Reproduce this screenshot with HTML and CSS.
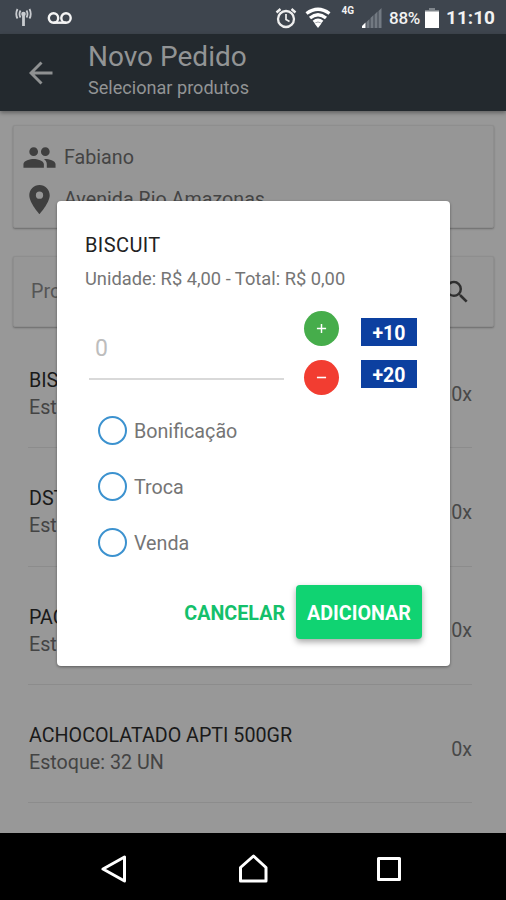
FILE: index.html
```html
<!DOCTYPE html>
<html lang="pt-BR">
<head>
    <meta charset="UTF-8">
    <meta name="viewport" content="width=device-width, initial-scale=1.0">
    <title>Novo Pedido</title>
    <link rel="stylesheet" href="styles.css">
</head>
<body>
    <div class="screen">
        <div class="status-bar">
            <svg class="icon-antenna" width="18" height="20" viewBox="0 0 18 20" fill="none" stroke="#c9ccd0" stroke-width="1.8">
                <path d="M8.500 7v11" stroke-width="2.800"/>
                <circle cx="8.500" cy="6" r="2.300" fill="#c9ccd0" stroke="none"/>
                <path d="M5.500 2.500q-2 3.500 0 7M11.500 2.500q2 3.500 0 7M2.500 1q-2.500 5 0 9.500M14.500 1q2.500 5 0 9.500"/>
            </svg>
            <svg class="icon-voicemail" width="26" height="14" viewBox="0 0 26 14" fill="none" stroke="#f4f4f4" stroke-width="2.400">
                <circle cx="6.500" cy="7" r="4.700"/>
                <circle cx="19" cy="7" r="4.700"/>
                <path d="M6.500 11.700H19"/>
            </svg>
            <svg class="icon-alarm" width="22" height="22" viewBox="0 0 22 22" fill="none" stroke="#eee" stroke-width="2.300">
                <circle cx="11" cy="12" r="8"/>
                <path d="M11 7v5.500l3.500 2" stroke-width="1.700"/>
                <path d="M1.500 5.500l4-3.500M20.500 5.500l-4-3.500" stroke-width="2.400"/>
            </svg>
            <svg class="icon-wifi" width="26" height="22" viewBox="0 0 26 22" fill="none" stroke="#fff" stroke-width="3.300">
                <path d="M1.500 6.500q11.500-8.500 23 0M5 11q8-6.500 16 0M8.700 15q4.300-3.800 8.600 0" />
                <path d="M9.500 16.500q3.500-2.500 7 0L13 21z" fill="#fff" stroke="none"/>
            </svg>
            <span class="network">4G</span>
            <svg class="icon-signal" width="20" height="20" viewBox="0 0 20 20" fill="#737a82">
                <path d="M0 20v-2l3.500-3.500V20z" fill="#fff"/>
                <path d="M4.500 20v-6l3-3v9zM8.500 20V10l3-3v13zM12.500 20V6.500l3-3V20zM16.500 20V3l3-3v20z"/>
            </svg>
            <span class="battery-level">88%</span>
            <svg class="icon-battery" width="14" height="20" viewBox="0 0 14 20">
                <path d="M4 0h6v2h4v2H0V2h4z" fill="#80868c"/>
                <path d="M0 3.500h14V20H0z" fill="#fff"/>
            </svg>
            <span class="clock">11:10</span>
        </div>

        <div class="header">
            <svg class="icon-back" width="24" height="24" viewBox="0 0 24 24" fill="none" stroke="#8f9192" stroke-width="2.900">
                <path d="M23.500 12H2.500M12.500 1.500L2 12l10.500 10.500"/>
            </svg>
            <div class="header-text">
                <h1>Novo Pedido</h1>
                <p>Selecionar produtos</p>
            </div>
        </div>

        <div class="content">
            <div class="card client">
                <div class="client-row">
                    <svg width="35" height="35" viewBox="0 0 24 24" fill="#3f3f3f">
                        <path d="M16 11c1.660 0 2.990-1.340 2.990-3S17.660 5 16 5s-3 1.340-3 3 1.340 3 3 3zm-8 0c1.660 0 2.990-1.340 2.990-3S9.660 5 8 5 5 6.340 5 8s1.340 3 3 3zm0 2c-2.330 0-7 1.170-7 3.500V19h14v-2.500c0-2.330-4.670-3.500-7-3.500zm8 0c-.29 0-.62.020-.97.050 1.160.84 1.970 1.970 1.970 3.450V19h6v-2.500c0-2.330-4.670-3.500-7-3.500z"/>
                    </svg>
                    <span>Fabiano</span>
                </div>
                <div class="client-row">
                    <svg width="35" height="35" viewBox="0 0 24 24" fill="#3f3f3f">
                        <path d="M12 2C8.130 2 5 5.130 5 9c0 5.250 7 13 7 13s7-7.750 7-13c0-3.870-3.130-7-7-7zm0 9.500a2.500 2.500 0 0 1 0-5 2.500 2.500 0 0 1 0 5z"/>
                    </svg>
                    <span>Avenida Rio Amazonas</span>
                </div>
            </div>

            <div class="card search">
                <span>Produto</span>
                <svg width="30" height="30" viewBox="0 0 24 24" fill="#303030">
                    <path d="M15.500 14h-.79l-.28-.27A6.470 6.470 0 0 0 16 9.500 6.500 6.500 0 1 0 9.500 16c1.610 0 3.090-.59 4.230-1.570l.27.280v.79l5 4.990L20.490 19l-4.990-5zm-6 0C7.010 14 5 11.990 5 9.500S7.010 5 9.500 5 14 7.010 14 9.500 11.990 14 9.500 14z"/>
                </svg>
            </div>

            <ul class="products">
                <li>
                    <div>
                        <h2>BISCUIT</h2>
                        <p>Estoque:</p>
                    </div>
                    <span class="qty">0x</span>
                </li>
                <li>
                    <div>
                        <h2>DST</h2>
                        <p>Estoque:</p>
                    </div>
                    <span class="qty">0x</span>
                </li>
                <li>
                    <div>
                        <h2>PAC</h2>
                        <p>Estoque:</p>
                    </div>
                    <span class="qty">0x</span>
                </li>
                <li>
                    <div>
                        <h2>ACHOCOLATADO APTI 500GR</h2>
                        <p>Estoque: 32 UN</p>
                    </div>
                    <span class="qty">0x</span>
                </li>
            </ul>
        </div>

        <div class="nav-bar">
            <svg width="30" height="30" viewBox="0 0 30 30" fill="none" stroke="#fff" stroke-width="3" stroke-linejoin="round">
                <path d="M23.500 3v24L2 15z"/>
            </svg>
            <svg width="30" height="30" viewBox="0 0 30 30" fill="none" stroke="#fff" stroke-width="3" stroke-linejoin="round">
                <path d="M2.500 27V13.500L15.500 2l12.500 11.500V27z"/>
            </svg>
            <svg width="30" height="30" viewBox="0 0 30 30" fill="none" stroke="#fff" stroke-width="3" stroke-linejoin="round">
                <path d="M3.500 4.500h21v21h-21z"/>
            </svg>
        </div>

        <div class="dialog">
            <h3>BISCUIT</h3>
            <p class="price">Unidade: R$ 4,00 - Total: R$ 0,00</p>

            <div class="amount">
                <div class="amount-input">0</div>
                <div class="steps">
                    <button class="round plus">
                        <svg width="11" height="11" viewBox="0 0 12 12" stroke="#fff" stroke-width="1.600"><path d="M1 6h10M6 1v10"/></svg>
                    </button>
                    <button class="round minus">
                        <svg width="11" height="11" viewBox="0 0 12 12" stroke="#fff" stroke-width="1.700"><path d="M1 6h10"/></svg>
                    </button>
                </div>
                <div class="quick">
                    <button>+10</button>
                    <button>+20</button>
                </div>
            </div>

            <div class="options">
                <label><span class="radio"></span><span class="option-name">Bonificação</span></label>
                <label><span class="radio"></span><span class="option-name">Troca</span></label>
                <label><span class="radio"></span><span class="option-name">Venda</span></label>
            </div>

            <div class="actions">
                <button class="cancel">CANCELAR</button>
                <button class="add">ADICIONAR</button>
            </div>
        </div>
    </div>
</body>
</html>
```
FILE: styles.css
```css
* {
    box-sizing: border-box;
    margin: 0;
    padding: 0;
}
body {
    font-family: Roboto, sans-serif;
    font-size: 19.700px;
    color: #444;
    background-color: #000;
}
svg {
    display: block;
    flex-shrink: 0;
}
button {
    border: none;
    font-family: inherit;
    cursor: pointer;
}
.screen {
    position: relative;
    display: flex;
    flex-direction: column;
    width: 506px;
    height: 900px;
    overflow: hidden;
}
.status-bar {
    display: flex;
    align-items: center;
    height: 34px;
    padding: 1px 11px 0 15px;
    background-color: #3e454e;
    color: #f2f2f2;
}
.icon-voicemail {
    margin-left: 14px;
}
.icon-alarm {
    margin-left: auto;
}
.icon-wifi {
    margin-left: 8px;
}
.network {
    margin: -14px 0 0 11px;
    font-size: 10px;
    font-weight: 700;
}
.icon-signal {
    margin-left: 8px;
}
.battery-level {
    margin-left: 7px;
    font-size: 17px;
    letter-spacing: -0.3px;
    font-weight: 500;
}
.icon-battery {
    margin-left: 5px;
}
.clock {
    margin-left: 7px;
    font-size: 19px;
    font-weight: 700;
}
.header {
    display: flex;
    align-items: center;
    height: 77px;
    padding: 0 29px;
    background-color: #23292e;
    color: #929495;
    box-shadow: 0 2px 4px rgba(0, 0, 0, 0.35);
    z-index: 1;
}
.header-text {
    margin-left: 35px;
}
.header h1 {
    font-size: 28px;
    font-weight: 400;
    line-height: 34px;
    margin-top: -3px;
}
.header p {
    font-size: 18.100px;
    line-height: 28px;
}
.content {
    flex: 1;
    padding: 14px 12px 0 13px;
    background-color: #989898;
}
.card {
    background-color: #969696;
    border: 1px solid #8e8e8e;
    border-radius: 2px;
    box-shadow: 0 1px 2px rgba(0, 0, 0, 0.3);
}
.client {
    height: 103px;
    padding: 10px 8px;
}
.client-row {
    display: flex;
    align-items: center;
    gap: 7px;
    height: 42px;
}
.search {
    display: flex;
    align-items: center;
    justify-content: space-between;
    height: 71px;
    margin-top: 28px;
    padding: 0 21px 0 17px;
    color: #555;
}
.products {
    list-style: none;
    margin: 3px 22px 0 15px;
}
.products li {
    display: flex;
    align-items: center;
    justify-content: space-between;
    height: 118.300px;
    padding: 11px 0 0 1px;
    border-bottom: 1px solid #8c8c8c;
}
.products h2 {
    font-size: 19.700px;
    font-weight: 400;
    line-height: 27px;
    color: #1a1a1a;
}
.products p {
    line-height: 27px;
}
.qty {
    color: #484848;
}
.nav-bar {
    display: flex;
    align-items: center;
    justify-content: center;
    gap: 107px;
    height: 67px;
    padding-top: 5px;
    background-color: #000;
}
/* lies over the dimmed product list */
.dialog {
    position: absolute;
    top: 201px;
    left: 57px;
    z-index: 2;
    width: 393px;
    height: 465px;
    padding: 29px 28px;
    background-color: #fff;
    border-radius: 4px;
    box-shadow: 0 1px 3px rgba(0, 0, 0, 0.4);
    color: #757575;
}
.dialog h3 {
    font-size: 20px;
    font-weight: 400;
    line-height: 30px;
    letter-spacing: 0.4px;
    color: #222;
}
.price {
    font-size: 18.300px;
    line-height: 37px;
}
.amount {
    display: flex;
    margin-top: 14px;
}
.amount-input {
    width: 195px;
    height: 69px;
    margin-left: 4px;
    padding: 24px 6px 0;
    border-bottom: 2px solid #d9d9d9;
    font-size: 23px;
    line-height: 28px;
    color: #bdbdbd;
}
.steps {
    display: flex;
    flex-direction: column;
    gap: 14px;
    margin-left: 20px;
}
.round {
    display: flex;
    align-items: center;
    justify-content: center;
    width: 35px;
    height: 35px;
    border-radius: 50%;
}
.plus {
    background-color: #46ad4b;
}
.minus {
    background-color: #f23d31;
}
.quick {
    display: flex;
    flex-direction: column;
    gap: 14px;
    margin: 7px 0 0 22px;
}
.quick button {
    width: 56px;
    height: 28px;
    padding-top: 3px;
    background-color: #0c40a0;
    color: #fff;
    font-size: 19.500px;
    font-weight: 700;
    line-height: 25px;
}
.options {
    margin: 7px 0 0 13px;
}
.options label {
    display: flex;
    align-items: center;
    gap: 7px;
    height: 56.300px;
}
.option-name {
    padding-top: 2px;
}
.radio {
    width: 29px;
    height: 29px;
    border: 2px solid #3c92cf;
    border-radius: 50%;
}
.actions {
    display: flex;
    align-items: center;
    justify-content: flex-end;
    gap: 11px;
    margin-top: 14px;
}
.actions button {
    padding-top: 3px;
    font-size: 19.700px;
    font-weight: 700;
}
.cancel {
    background: none;
    color: #14c06b;
}
.add {
    width: 126px;
    height: 54px;
    border-radius: 4px;
    background-color: #10d372;
    color: #fff;
    box-shadow: 0 3px 6px rgba(0, 0, 0, 0.35);
}
```
